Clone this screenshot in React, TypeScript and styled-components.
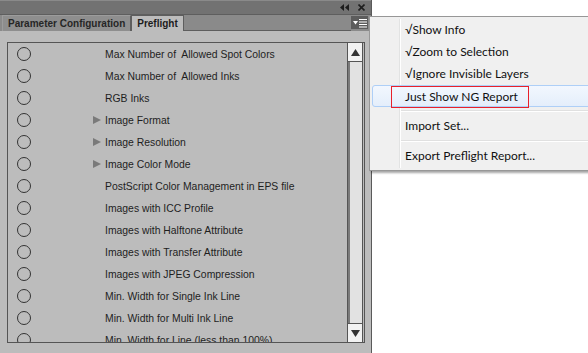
import styled, { createGlobalStyle } from 'styled-components';

const GlobalStyle = createGlobalStyle`
  html, body {
    margin: 0;
    padding: 0;
    background: #ffffff;
  }
`;

interface CheckItem {
  label: string;
  expandable?: boolean;
}

const checks: CheckItem[] = [
  { label: 'Max Number of  Allowed Spot Colors' },
  { label: 'Max Number of  Allowed Inks' },
  { label: 'RGB Inks' },
  { label: 'Image Format', expandable: true },
  { label: 'Image Resolution', expandable: true },
  { label: 'Image Color Mode', expandable: true },
  { label: 'PostScript Color Management in EPS file' },
  { label: 'Images with ICC Profile' },
  { label: 'Images with Halftone Attribute' },
  { label: 'Images with Transfer Attribute' },
  { label: 'Images with JPEG Compression' },
  { label: 'Min. Width for Single Ink Line' },
  { label: 'Min. Width for Multi Ink Line' },
  { label: 'Min. Width for Line (less than 100%)' },
];

function App() {
  return (
    <>
      <GlobalStyle />
      <Page>
        <Panel>
          <TitleBar>
            <TitleIcons>
              <svg width='9' height='7' viewBox='0 0 9 7'>
                <path d='M4 0 L0 3.5 L4 7 Z M9 0 L5 3.5 L9 7 Z' fill='#1e1e1e' />
              </svg>
              <svg width='7' height='7' viewBox='0 0 7 7'>
                <path d='M0.5 0.5 L6.5 6.5 M6.5 0.5 L0.5 6.5' stroke='#1e1e1e' strokeWidth='1.6' />
              </svg>
            </TitleIcons>
          </TitleBar>
          <TabBar>
            <Tab>Parameter Configuration</Tab>
            <Tab $active>Preflight</Tab>
            <TabSpacer />
            <MenuButton>
              <svg width='14' height='10' viewBox='0 0 14 10'>
                <path d='M0 3 L5 3 L2.5 6.5 Z' fill='#ffffff' />
                <path d='M6 1.5 H14 M6 4 H14 M6 6.5 H14 M6 9 H14' stroke='#ffffff' strokeWidth='1.2' />
              </svg>
            </MenuButton>
          </TabBar>
          <Body>
            <ListBox>
              <Rows>
                {checks.map((c) => (
                  <Row key={c.label}>
                    <Circle />
                    <Arrow>
                      {c.expandable && (
                        <svg width='8' height='8' viewBox='0 0 8 8'>
                          <path d='M0 0 L8 4 L0 8 Z' fill='#7a7a7a' />
                        </svg>
                      )}
                    </Arrow>
                    <Label>{c.label}</Label>
                  </Row>
                ))}
              </Rows>
              <ScrollBar>
                <ScrollButton>
                  <svg width='9' height='7' viewBox='0 0 9 7'>
                    <path d='M4.5 0 L9 7 L0 7 Z' fill='#333333' />
                  </svg>
                </ScrollButton>
                <Track />
                <ScrollButton>
                  <svg width='9' height='7' viewBox='0 0 9 7'>
                    <path d='M0 0 L9 0 L4.5 7 Z' fill='#333333' />
                  </svg>
                </ScrollButton>
              </ScrollBar>
            </ListBox>
          </Body>
        </Panel>

        <Menu>
          <MenuItem>√Show Info</MenuItem>
          <MenuItem>√Zoom to Selection</MenuItem>
          <MenuItem>√Ignore Invisible Layers</MenuItem>
          <MenuItem $hover>
            <Marked>Just Show NG Report</Marked>
          </MenuItem>
          <Separator />
          <MenuItem>Import Set...</MenuItem>
          <Separator />
          <MenuItem>Export Preflight Report...</MenuItem>
        </Menu>
      </Page>
    </>
  );
}

const Page = styled.div`
  position: relative;
  width: 588px;
  height: 353px;
  overflow: hidden;
  background: #ffffff;
`;

const Panel = styled.div`
  display: flex;
  flex-direction: column;
  width: 371px;
  height: 353px;
  background: #bcbcbc;
  border-right: 1px solid #5a5a5a;
`;

const TitleBar = styled.div`
  display: flex;
  flex-shrink: 0;
  justify-content: flex-end;
  align-items: center;
  height: 13px;
  background: #727272;
  border-top: 1px solid #8a8a8a;
  padding-right: 6px;
`;

const TitleIcons = styled.div`
  display: flex;
  align-items: center;
  gap: 9px;
`;

const TabBar = styled.div`
  display: flex;
  flex-shrink: 0;
  align-items: flex-end;
  height: 16px;
  background: #8a8a8a;
  border-top: 1px solid #5e5e5e;
  padding-left: 2px;
`;

const Tab = styled.div<{ $active?: boolean }>`
  height: 15px;
  line-height: 15px;
  padding: 0 5px;
  font-family: 'Liberation Sans', Arial, sans-serif;
  font-size: 10px;
  font-weight: bold;
  color: ${({ $active }) => ($active ? '#1c1c1c' : '#262626')};
  background: ${({ $active }) => ($active ? '#bcbcbc' : '#8e8e8e')};
  border-left: 1px solid ${({ $active }) => ($active ? '#5e5e5e' : '#9c9c9c')};
  border-right: 1px solid #5e5e5e;
  border-top: 1px solid ${({ $active }) => ($active ? '#5e5e5e' : '#9c9c9c')};
  white-space: nowrap;
`;

const TabSpacer = styled.div`
  flex: 1;
  align-self: stretch;
  border-bottom: 1px solid #5e5e5e;
`;

const MenuButton = styled.div`
  display: flex;
  align-items: center;
  justify-content: center;
  width: 17px;
  height: 13px;
  margin: 0 3px 2px 0;
  background: #5c5c5c;
`;

const Body = styled.div`
  flex: 1;
  min-height: 0;
  padding: 11px 6px 10px 7px;
`;

const ListBox = styled.div`
  display: flex;
  height: 100%;
  box-sizing: border-box;
  border: 1px solid #555555;
  overflow: hidden;
`;

const Rows = styled.div`
  flex: 1;
  display: flex;
  flex-direction: column;
  overflow: hidden;
`;

const Row = styled.div`
  display: flex;
  align-items: center;
  flex-shrink: 0;
  height: 22px;
`;

const Circle = styled.div`
  width: 12px;
  height: 12px;
  margin-left: 9px;
  border: 1px solid #333333;
  border-radius: 50%;
  flex-shrink: 0;
`;

const Arrow = styled.div`
  display: flex;
  align-items: center;
  width: 12px;
  height: 8px;
  margin-left: 62px;
  flex-shrink: 0;
`;

const Label = styled.div`
  font-family: 'Liberation Sans', Arial, sans-serif;
  font-size: 10.4px;
  color: #1e1e1e;
  white-space: pre;
`;

const ScrollBar = styled.div`
  display: flex;
  flex-direction: column;
  width: 14px;
  border-left: 1px solid #555555;
  border-right: 1px solid #555555;
  margin-right: 1px;
`;

const ScrollButton = styled.div`
  display: flex;
  align-items: center;
  justify-content: center;
  height: 18px;
  background: #f2f2f2;
  border-bottom: 1px solid #555555;
  &:last-child {
    border-bottom: none;
    border-top: 1px solid #555555;
  }
`;

const Track = styled.div`
  flex: 1;
  background: #e2e2e2;
  border-left: 2px solid #7a7a7a;
`;

const Menu = styled.div`
  position: absolute;
  left: 369px;
  top: 16px;
  width: 225px;
  padding: 2px 2px 3px;
  background: #f0f0f0;
  border: 1px solid #979797;
  box-shadow: 2px 2px 2px rgba(0, 0, 0, 0.35);
  font-family: Lato, 'Noto Sans', sans-serif;
  font-size: 12px;
  color: #111111;
  &::before {
    content: '';
    position: absolute;
    left: 29px;
    top: 2px;
    bottom: 2px;
    width: 1px;
    background: #e2e3e3;
    border-right: 1px solid #ffffff;
  }
`;

const MenuItem = styled.div<{ $hover?: boolean }>`
  position: relative;
  height: 22px;
  box-sizing: border-box;
  padding-left: 32px;
  margin-right: 4px;
  border: 1px solid ${({ $hover }) => ($hover ? '#aecff7' : 'transparent')};
  border-radius: 3px;
  background: ${({ $hover }) =>
    $hover ? 'linear-gradient(#f2f7fe, #e4eefb)' : 'transparent'};
  white-space: nowrap;
  line-height: 20px;
`;

const Marked = styled.span`
  display: inline-block;
  margin-left: -14px;
  padding: 0 10px 0 13px;
  line-height: 20px;
  border: 1px solid #e8212b;
`;

const Separator = styled.div`
  height: 8px;
  margin-left: 29px;
  position: relative;
  &::after {
    content: '';
    position: absolute;
    left: 0;
    right: 0;
    top: 3px;
    height: 1px;
    background: #e0e0e0;
    border-bottom: 1px solid #ffffff;
  }
`;

export default App;
